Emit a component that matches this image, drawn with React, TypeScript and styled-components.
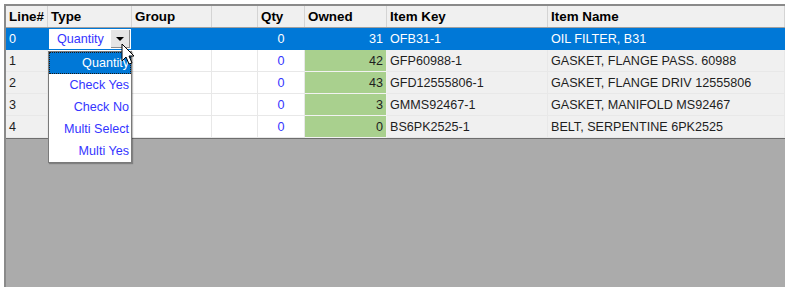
import styled, { createGlobalStyle, css } from 'styled-components';

const GlobalStyle = createGlobalStyle`
  html, body {
    margin: 0;
    padding: 0;
    background: #ffffff;
    font-family: "Liberation Sans", Arial, sans-serif;
    font-size: 12.6px;
  }
`;

const COLS = '42px 84px 80px 46px 47px 82px 161px 1fr';

type Tone = 'head' | 'white' | 'green' | 'selected';
type Align = 'left' | 'center' | 'right';

const Page = styled.div`
  width: 785px;
  height: 287px;
  padding: 4px 0 0 4px;
  box-sizing: border-box;
  overflow: hidden;
`;

const Frame = styled.div`
  height: 100%;
  border-top: 2px solid #8a8a8a;
  border-left: 2px solid #8a8a8a;
  display: flex;
  flex-direction: column;
  background: #ababab;
`;

const HeaderRow = styled.div`
  display: grid;
  grid-template-columns: ${COLS};
  height: 22px;
  background: #f0f0f0;
  border-bottom: 1px solid #a0a0a0;
  box-sizing: border-box;
`;

const HeaderCell = styled.div`
  font-weight: bold;
  font-size: 13.4px;
  color: #000;
  padding: 3px 0 0 3px;
  border-right: 1px solid #d4d4d4;
  white-space: nowrap;
  overflow: hidden;
`;

const Body = styled.div`
  display: flex;
  flex-direction: column;
  border-bottom: 1px solid #6e6e6e;
`;

const Row = styled.div`
  display: grid;
  grid-template-columns: ${COLS};
  height: 22px;
`;

const toneBg: Record<Tone, string> = {
  head: '#f0f0f0',
  white: '#ffffff',
  green: '#a9d08e',
  selected: '#0078d7',
};

const Cell = styled.div<{ $tone: Tone; $align?: Align; $blue?: boolean }>`
  position: relative;
  background: ${(p) => toneBg[p.$tone]};
  color: ${(p) => (p.$tone === 'selected' ? '#ffffff' : p.$blue ? '#3535ff' : '#1e1e1e')};
  text-align: ${(p) => p.$align || 'left'};
  padding: 4px 3px 0 3px;
  box-sizing: border-box;
  border-right: 1px solid ${(p) => (p.$tone === 'selected' ? '#0078d7' : '#e8e8e8')};
  border-bottom: 1px solid ${(p) => (p.$tone === 'selected' ? '#0078d7' : '#e8e8e8')};
  white-space: nowrap;
  ${(p) =>
    p.$tone === 'green' &&
    css`
      border-right-color: #f2f2f2;
      border-bottom-color: #f2f2f2;
    `}
`;

const EditorCell = styled.div`
  position: relative;
  background: #0078d7;
  padding: 1px;
  box-sizing: border-box;
`;

const Combo = styled.div`
  height: 100%;
  background: #ffffff;
  display: flex;
  align-items: center;
  justify-content: space-between;
  padding-left: 8px;
  color: #3535ff;
`;

const ComboButton = styled.div`
  width: 19px;
  height: 18px;
  background: #e5e5e5;
  border-right: 1px solid #8d8d8d;
  border-bottom: 1px solid #8d8d8d;
  box-sizing: border-box;
  display: flex;
  align-items: center;
  justify-content: center;
  margin-right: 1px;
`;

const Triangle = styled.div`
  width: 0;
  height: 0;
  border-left: 4px solid transparent;
  border-right: 4px solid transparent;
  border-top: 4px solid #000;
`;

const DropList = styled.div`
  position: absolute;
  top: 23px;
  left: 0;
  width: 84px;
  background: #ffffff;
  border: 1px solid #7a7a7a;
  box-shadow: 1px 1px 1px rgba(0, 0, 0, 0.25);
  z-index: 5;
  box-sizing: border-box;
`;

const DropItem = styled.div<{ $active?: boolean }>`
  height: 22px;
  padding: 3px 1px 0 0;
  text-align: right;
  box-sizing: border-box;
  color: ${(p) => (p.$active ? '#ffffff' : '#3535ff')};
  background: ${(p) => (p.$active ? '#0078d7' : '#ffffff')};
  border: 1px ${(p) => (p.$active ? 'dotted #1a1a1a' : 'solid transparent')};
`;

const Cursor = styled.svg`
  position: absolute;
  left: 73px;
  top: 15px;
  z-index: 6;
`;

const Filler = styled.div`
  flex: 1;
  background: #ababab;
`;

const rows = [
  { line: '0', qty: '0', owned: '31', key: 'OFB31-1', name: 'OIL FILTER, B31' },
  { line: '1', qty: '0', owned: '42', key: 'GFP60988-1', name: 'GASKET, FLANGE PASS. 60988' },
  { line: '2', qty: '0', owned: '43', key: 'GFD12555806-1', name: 'GASKET, FLANGE DRIV 12555806' },
  { line: '3', qty: '0', owned: '3', key: 'GMMS92467-1', name: 'GASKET, MANIFOLD MS92467' },
  { line: '4', qty: '0', owned: '0', key: 'BS6PK2525-1', name: 'BELT, SERPENTINE 6PK2525' },
];

const types = ['Quantity', 'Check Yes', 'Check No', 'Multi Select', 'Multi Yes'];

export default function App() {
  return (
    <Page>
      <GlobalStyle />
      <Frame>
        <HeaderRow>
          <HeaderCell>Line#</HeaderCell>
          <HeaderCell>Type</HeaderCell>
          <HeaderCell>Group</HeaderCell>
          <HeaderCell />
          <HeaderCell>Qty</HeaderCell>
          <HeaderCell>Owned</HeaderCell>
          <HeaderCell>Item Key</HeaderCell>
          <HeaderCell>Item Name</HeaderCell>
        </HeaderRow>
        <Body>
          {rows.map((r, i) => {
            const sel = i === 0;
            return (
              <Row key={r.line}>
                <Cell $tone={sel ? 'selected' : 'head'}>{r.line}</Cell>
                {sel ? (
                  <EditorCell>
                    <Combo>
                      Quantity
                      <ComboButton>
                        <Triangle />
                      </ComboButton>
                    </Combo>
                    <DropList>
                      {types.map((t, j) => (
                        <DropItem key={t} $active={j === 0}>
                          {t}
                        </DropItem>
                      ))}
                    </DropList>
                    <Cursor width="16" height="24" viewBox="0 0 16 24">
                      <path
                        d="M1 1 L1 18 L5 14 L8 21 L11 20 L8 13 L13 13 Z"
                        fill="#ffffff"
                        stroke="#000000"
                        strokeWidth="1"
                      />
                    </Cursor>
                  </EditorCell>
                ) : (
                  <Cell $tone="white" />
                )}
                <Cell $tone={sel ? 'selected' : 'white'} />
                <Cell $tone={sel ? 'selected' : 'white'} />
                <Cell $tone={sel ? 'selected' : 'white'} $align="center" $blue>
                  {r.qty}
                </Cell>
                <Cell $tone={sel ? 'selected' : 'green'} $align="right">
                  {r.owned}
                </Cell>
                <Cell $tone={sel ? 'selected' : 'head'}>{r.key}</Cell>
                <Cell $tone={sel ? 'selected' : 'head'}>{r.name}</Cell>
              </Row>
            );
          })}
        </Body>
        <Filler />
      </Frame>
    </Page>
  );
}
